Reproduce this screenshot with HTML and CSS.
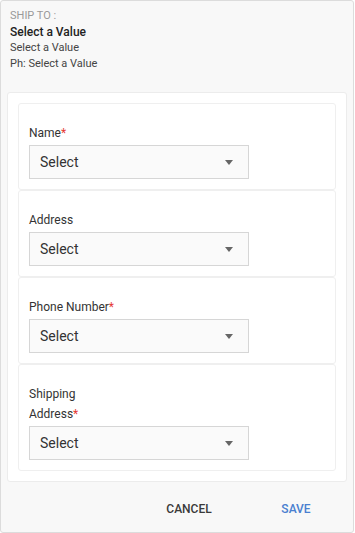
FILE: index.html
```html
<!DOCTYPE html>
<html lang="en">
<head>
    <meta charset="UTF-8">
    <meta name="viewport" content="width=device-width, initial-scale=1.0">
    <title>Ship To</title>
    <link rel="stylesheet" href="styles.css">
</head>
<body>
    <div class="dialog">
        <div class="ship-info">
            <p class="ship-label">SHIP TO :</p>
            <p class="ship-name">Select a Value</p>
            <p class="ship-line">Select a Value</p>
            <p class="ship-line">Ph: Select a Value</p>
        </div>
        <div class="form-panel">
            <div class="field-card">
                <label class="field-label">Name<span class="req">*</span></label>
                <div class="select-box"><span>Select</span><span class="caret"></span></div>
            </div>
            <div class="field-card">
                <label class="field-label">Address</label>
                <div class="select-box"><span>Select</span><span class="caret"></span></div>
            </div>
            <div class="field-card">
                <label class="field-label">Phone Number<span class="req">*</span></label>
                <div class="select-box"><span>Select</span><span class="caret"></span></div>
            </div>
            <div class="field-card">
                <label class="field-label">Shipping Address<span class="req">*</span></label>
                <div class="select-box"><span>Select</span><span class="caret"></span></div>
            </div>
        </div>
        <div class="actions">
            <button class="btn">CANCEL</button>
            <button class="btn btn-primary">SAVE</button>
        </div>
    </div>
</body>
</html>
```
FILE: styles.css
```css
* {
    margin: 0;
    padding: 0;
    box-sizing: border-box;
    font-family: Roboto, 'Liberation Sans', sans-serif;
}

body {
    background-color: #fff;
}

.dialog {
    width: 354px;
    height: 533px;
    border: 1px solid #dcdcdc;
    border-radius: 3px;
    background-color: #f8f8f8;
    display: flex;
    flex-direction: column;
}

.ship-info {
    padding: 7px 9px 0;
    height: 91px;
}

.ship-info p {
    line-height: 16px;
    font-size: 11px;
    color: #444;
}

.ship-info .ship-label {
    color: #9a9a9a;
}

.ship-info .ship-name {
    font-size: 12px;
    font-weight: 500;
    color: #222;
}

.form-panel {
    margin: 0 6px;
    width: 340px;
    padding: 10px;
    background-color: #fff;
    border: 1px solid #ececec;
    border-radius: 3px;
}

.field-card {
    border: 1px solid #efefef;
    border-radius: 3px;
    padding: 19px 10px 10px;
}

.field-label {
    display: block;
    width: 90px;
    font-size: 12px;
    line-height: 20px;
    color: #333;
    margin-bottom: 2px;
    white-space: normal;
}

.field-label .req {
    color: #e53935;
}

.select-box {
    width: 220px;
    height: 34px;
    border: 1px solid #d6d6d6;
    background-color: #fafafa;
    display: flex;
    align-items: center;
    justify-content: space-between;
    padding: 0 10px 0 10px;
    font-size: 14px;
    color: #333;
}

.caret {
    width: 0;
    height: 0;
    border-left: 4.5px solid transparent;
    border-right: 4.5px solid transparent;
    border-top: 5px solid #666;
    margin-right: 5px;
}

.actions {
    display: flex;
    justify-content: flex-end;
    gap: 19px;
    padding: 9px 13px 0 0;
}

.btn {
    min-width: 88px;
    height: 36px;
    border: none;
    background: none;
    font-size: 12px;
    font-weight: 500;
    color: #3a3a3a;
    cursor: pointer;
}

.btn-primary {
    color: #4a80d0;
}
```
